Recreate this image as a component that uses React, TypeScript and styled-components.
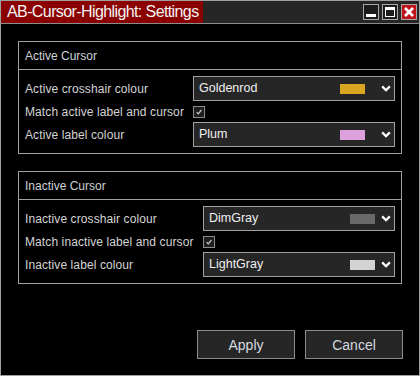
import React from 'react';
import styled, { createGlobalStyle } from 'styled-components';

const Global = createGlobalStyle`
  html, body { margin: 0; padding: 0; background: #000; }
  * { box-sizing: border-box; }
`;

const Window = styled.div`
  width: 420px;
  height: 376px;
  border: 1px solid #a0a0a0;
  background: #000;
  display: flex;
  flex-direction: column;
  font-family: "Liberation Sans", Arial, sans-serif;
  color: #d4d4d4;
`;

const TitleBar = styled.div`
  height: 23px;
  flex: none;
  display: flex;
  align-items: stretch;
  background: #262626;
  border-bottom: 1px solid #8c8c8c;
`;

const TitleText = styled.div`
  width: 202px;
  background: #8b0000;
  color: #f4f4f4;
  font-size: 16px;
  letter-spacing: -0.6px;
  padding-left: 6px;
  display: flex;
  align-items: center;
  white-space: nowrap;
`;

const TitleButtons = styled.div`
  margin-left: auto;
  display: flex;
  align-items: center;
  gap: 3px;
  padding-right: 2px;
`;

const TitleButton = styled.div<{ $close?: boolean }>`
  width: 16px;
  height: 16px;
  border: 1px solid #a8a8a8;
  background: ${p => (p.$close ? '#c0141a' : '#1c1c1c')};
  display: flex;
  align-items: center;
  justify-content: center;
`;

const Content = styled.div`
  flex: 1;
  display: flex;
  flex-direction: column;
  padding: 17px 17px 16px 17px;
`;

const Group = styled.div`
  border: 1px solid #a0a0a0;
  & + & { margin-top: 17px; }
`;

const GroupHeader = styled.div`
  height: 28px;
  border-bottom: 1px solid #a0a0a0;
  padding-left: 6px;
  font-size: 12px;
  color: #cdd3d9;
  display: flex;
  align-items: center;
`;

const Rows = styled.div<{ $labelWidth: number }>`
  display: grid;
  grid-template-columns: ${p => p.$labelWidth}px 1fr;
  grid-template-rows: 25px 21px 25px;
  padding: 6px;
`;

const Label = styled.div`
  font-size: 12px;
  letter-spacing: 0.1px;
  white-space: nowrap;
  align-self: center;
`;

const Select = styled.div`
  height: 25px;
  border: 1px solid #a0a0a0;
  background: #262626;
  display: flex;
  align-items: center;
  padding: 0 3px 0 5px;
  font-size: 12.5px;
  color: #f0f0f0;
`;

const SelectText = styled.span`
  padding-bottom: 2px;
`;

const Swatch = styled.span<{ $color: string; $gap: number }>`
  margin-left: auto;
  width: 25px;
  height: 10px;
  background: ${p => p.$color};
  margin-right: ${p => p.$gap}px;
`;

const CheckWrap = styled.div`
  align-self: center;
  width: 12px;
  height: 12px;
  border: 1px solid #8c8c8c;
  background: #1e1e1e;
  display: flex;
  align-items: center;
  justify-content: center;
`;

const Footer = styled.div`
  margin-top: auto;
  margin-right: -1px;
  display: flex;
  justify-content: flex-end;
  gap: 10px;
`;

const Button = styled.button`
  width: 98px;
  height: 29px;
  border: 1px solid #8c8c8c;
  background: #262626;
  color: #d4dae0;
  font-family: "Liberation Sans", Arial, sans-serif;
  font-size: 14px;
  padding: 0;
`;

const Chevron = () => (
  <svg width="10" height="7" viewBox="0 0 10 7">
    <polyline points="1.2,1.4 5,5.2 8.8,1.4" fill="none" stroke="#fff" strokeWidth="2.3" />
  </svg>
);

const Check = () => (
  <svg width="10" height="10" viewBox="0 0 10 10">
    <polyline points="2.6,5.2 4.3,6.9 7.4,3" fill="none" stroke="#c4c4c4" strokeWidth="1.3" />
  </svg>
);

type Item = { label: string; name: string; color: string };

const Dropdown = ({ item, gap }: { item: Item; gap: number }) => (
  <Select>
    <SelectText>{item.name}</SelectText>
    <Swatch $color={item.color} $gap={gap} />
    <Chevron />
  </Select>
);

type GroupProps = {
  title: string;
  labelWidth: number;
  gap: number;
  cross: Item;
  matchLabel: string;
  label: Item;
};

const SettingsGroup = ({ title, labelWidth, gap, cross, matchLabel, label }: GroupProps) => (
  <Group>
    <GroupHeader>{title}</GroupHeader>
    <Rows $labelWidth={labelWidth}>
      <Label>{cross.label}</Label>
      <Dropdown item={cross} gap={gap} />
      <Label>{matchLabel}</Label>
      <CheckWrap>
        <Check />
      </CheckWrap>
      <Label>{label.label}</Label>
      <Dropdown item={label} gap={gap} />
    </Rows>
  </Group>
);

export default function App() {
  return (
    <>
      <Global />
      <Window>
        <TitleBar>
          <TitleText>AB-Cursor-Highlight: Settings</TitleText>
          <TitleButtons>
            <TitleButton>
              <svg width="14" height="14" viewBox="0 0 14 14">
                <rect x="2" y="9" width="10" height="3" fill="#fff" />
              </svg>
            </TitleButton>
            <TitleButton>
              <svg width="14" height="14" viewBox="0 0 14 14">
                <rect x="2.5" y="3" width="9" height="8.5" fill="none" stroke="#fff" strokeWidth="1" />
                <rect x="2" y="2" width="10" height="3" fill="#fff" />
              </svg>
            </TitleButton>
            <TitleButton $close>
              <svg width="14" height="14" viewBox="0 0 14 14">
                <path d="M3 3 L11 11 M11 3 L3 11" stroke="#fff" strokeWidth="2.6" />
              </svg>
            </TitleButton>
          </TitleButtons>
        </TitleBar>
        <Content>
          <SettingsGroup
            title="Active Cursor"
            labelWidth={168}
            gap={16}
            cross={{ label: 'Active crosshair colour', name: 'Goldenrod', color: '#daa520' }}
            matchLabel="Match active label and cursor"
            label={{ label: 'Active label colour', name: 'Plum', color: '#dda0dd' }}
          />
          <SettingsGroup
            title="Inactive Cursor"
            labelWidth={178}
            gap={6}
            cross={{ label: 'Inactive crosshair colour', name: 'DimGray', color: '#696969' }}
            matchLabel="Match inactive label and cursor"
            label={{ label: 'Inactive label colour', name: 'LightGray', color: '#d3d3d3' }}
          />
          <Footer>
            <Button>Apply</Button>
            <Button>Cancel</Button>
          </Footer>
        </Content>
      </Window>
    </>
  );
}
